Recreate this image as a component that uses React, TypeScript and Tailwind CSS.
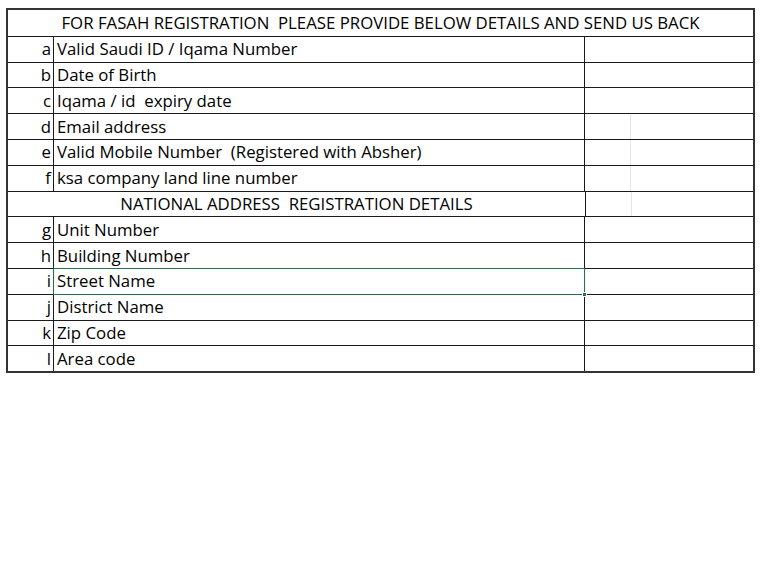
const rowsTop = [
  { k: "a", label: "Valid Saudi ID / Iqama Number" },
  { k: "b", label: "Date of Birth" },
  { k: "c", label: "Iqama / id  expiry date" },
  { k: "d", label: "Email address", faint: true },
  { k: "e", label: "Valid Mobile Number  (Registered with Absher)", faint: true },
  { k: "f", label: "ksa company land line number", faint: true },
];

const rowsBottom = [
  { k: "g", label: "Unit Number" },
  { k: "h", label: "Building Number" },
  { k: "i", label: "Street Name", selected: true },
  { k: "j", label: "District Name" },
  { k: "k", label: "Zip Code" },
  { k: "l", label: "Area code" },
];

type Row = { k: string; label: string; faint?: boolean; selected?: boolean };

function DetailRow({ row }: { row: Row }) {
  return (
    <div className="flex h-[25.8px] border-t border-[#1a1a1a]">
      <div className="w-[46px] shrink-0 border-r border-[#1a1a1a] flex items-center justify-end pr-[2px] pt-[1px]">
        {row.k}
      </div>
      <div className="relative w-[531px] shrink-0 border-r border-[#1a1a1a] flex items-center pl-[3px] pt-[1px] whitespace-pre">
        {row.label}
        {row.selected && (
          <>
            <span className="absolute -top-[1px] -left-[1px] -right-[1px] -bottom-[1px] border-[1.5px] border-[#217346] z-10" />
            <span className="absolute -right-[3px] -bottom-[3px] w-[5px] h-[5px] bg-[#217346] border border-white z-20" />
          </>
        )}
      </div>
      <div className="flex-1 flex">
        <div className={`w-[46px] ${row.faint ? "border-r border-[#e6e6e6]" : ""}`} />
      </div>
    </div>
  );
}

export default function App() {
  return (
    <div
      className="w-[766px] h-[571px] bg-white pt-[8px] pl-[6px] text-[#000] text-[16.8px] leading-none"
      style={{ fontFamily: '"Open Sans", "Noto Sans", sans-serif' }}
    >
      <div className="w-[749px] border-2 border-[#333]">
        {/* Title row */}
        <div className="h-[25.8px] flex items-center justify-center pt-[1px] whitespace-pre">
          FOR FASAH REGISTRATION  PLEASE PROVIDE BELOW DETAILS AND SEND US BACK
        </div>

        {rowsTop.map(r => (
          <DetailRow key={r.k} row={r} />
        ))}

        {/* Section heading */}
        <div className="flex h-[25.8px] border-t border-[#1a1a1a]">
          <div className="w-[578px] shrink-0 border-r border-[#1a1a1a] flex items-center justify-center pt-[1px] whitespace-pre">
            NATIONAL ADDRESS  REGISTRATION DETAILS
          </div>
          <div className="flex-1 flex">
            <div className="w-[46px] border-r border-[#e6e6e6]" />
          </div>
        </div>

        {rowsBottom.map(r => (
          <DetailRow key={r.k} row={r} />
        ))}
      </div>
    </div>
  );
}
